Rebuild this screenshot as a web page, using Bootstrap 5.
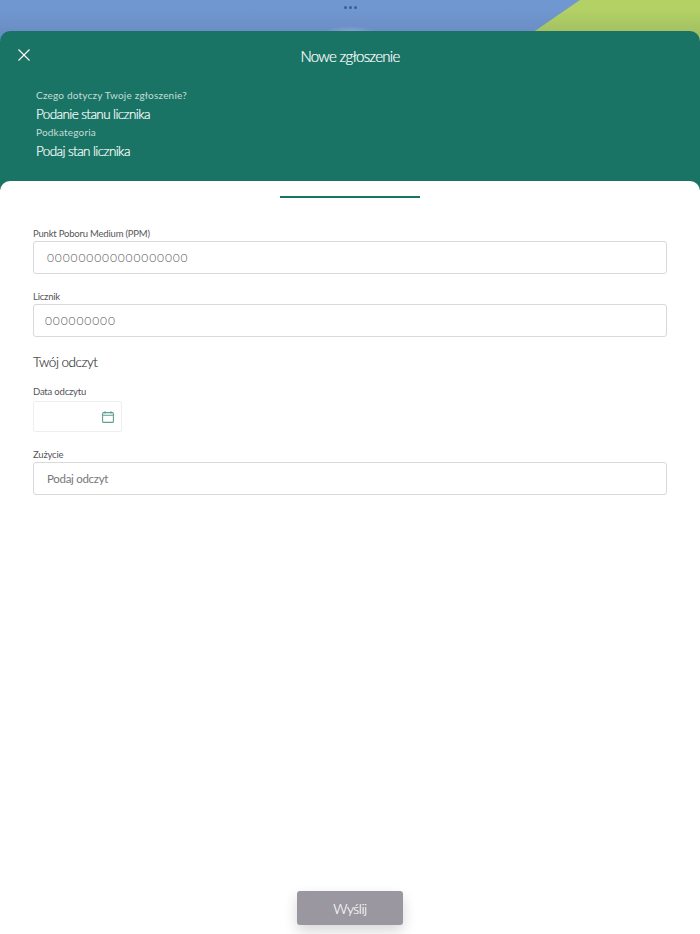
<!DOCTYPE html>
<html lang="pl">
<head>
    <meta charset="UTF-8">
    <meta name="viewport" content="width=device-width, initial-scale=1.0">
    <title>Nowe zgłoszenie</title>
    <link href="https://cdn.jsdelivr.net/npm/bootstrap@5.3.0/dist/css/bootstrap.min.css" rel="stylesheet">
    <style>
        html, body { height: 100%; }
        body { font-family: Lato, "Open Sans", sans-serif; background: #fff; color: #3d3d3f; overflow: hidden; }
        .app-screen { height: 934px; }
        .top-strip {
            height: 40px; margin-bottom: -9px; padding-top: 6px;
            background:
                radial-gradient(ellipse 24px 5px at 350px 31px, rgba(255,255,255,.18), rgba(255,255,255,0)),
                linear-gradient(to bottom, rgba(60,80,110,0) 10px, rgba(60,80,110,.14) 34px),
                linear-gradient(145.5deg, #7197d0 0, #7197d0 328px, #b3d164 329px, #b3d164 100%);
        }
        .strip-dots { gap: 2px; }
        .strip-dots span { width: 3px; height: 3px; border-radius: 50%; background: #3f5c9c; }
        .head-panel { background: #197465; color: #fff; border-radius: 10px 10px 0 0; height: 159px; margin-bottom: -9px; position: relative; padding: 0 36px; }
        .close-icon { position: absolute; left: 18px; top: 18px; width: 12px; height: 12px; display: block; }
        .panel-title { font-size: 15px; font-weight: 300; letter-spacing: -.7px; line-height: 20px; padding-top: 15px; margin-bottom: 22px; text-align: center; -webkit-text-stroke: .2px #fff; }
        .info-label { font-size: 10px; line-height: 15px; letter-spacing: .2px; color: #c6dcd7; }
        .info-value { font-size: 13.5px; font-weight: 300; letter-spacing: -.6px; line-height: 18px; margin: 2px 0; -webkit-text-stroke: .2px #fff; }
        .form-sheet { background: #fff; border-radius: 10px 10px 0 0; position: relative; flex: 1; padding: 15px 33px 9px; }
        .step-bar { width: 140px; height: 2px; background: #197465; margin: 0 auto 29px; }
        .field-label { font-size: 9.5px; letter-spacing: -.2px; line-height: 14px; margin: 0; color: #55555a; display: block; }
        .date-label { margin-bottom: 2px; }
        .field-input.form-control { height: 33px; font-size: 11.5px; letter-spacing: -.3px; padding: 0 13px; border: 1px solid #d9d9d9; border-radius: 3px; color: #77777b; background: #fff; box-shadow: none; }
        .field-input.form-control::placeholder { color: #77777b; opacity: 1; }
        .ppm-input.form-control { font-size: 12px; font-weight: 300; color: #55555a; letter-spacing: .9px; }
        .meter-input.form-control { font-size: 12px; font-weight: 300; color: #55555a; padding-left: 11px; letter-spacing: .9px; }
        .field-block { margin-bottom: 16px; }
        .section-title { font-size: 13.5px; font-weight: 300; letter-spacing: -.5px; line-height: 18px; margin: 0 0 14px; color: #2f2f31; -webkit-text-stroke: .15px #2f2f31; }
        .date-box { width: 89px; height: 31px; border: 1px solid #eeeeee; border-radius: 2px; padding-right: 7px; }
        .send-btn.btn { width: 106px; height: 34px; background: #9a97a0; border: 0; border-radius: 3px; color: #fff; font-size: 14px; font-weight: 300; letter-spacing: -.5px; padding: 0; box-shadow: 0 6px 14px rgba(0,0,0,.16); -webkit-text-stroke: .15px #fff; }
    </style>
</head>
<body>
<div class="app-screen d-flex flex-column">
    <div class="top-strip d-flex justify-content-center">
        <div class="strip-dots d-flex"><span></span><span></span><span></span></div>
    </div>

    <div class="head-panel">
        <svg class="close-icon" viewBox="0 0 12 12" fill="none" stroke="#fff" stroke-width="1.1"><path d="M.5.5l11 11M11.5.5l-11 11"/></svg>
        <div class="panel-title">Nowe zgłoszenie</div>
        <div class="info-label">Czego dotyczy Twoje zgłoszenie?</div>
        <div class="info-value">Podanie stanu licznika</div>
        <div class="info-label">Podkategoria</div>
        <div class="info-value">Podaj stan licznika</div>
    </div>

    <div class="form-sheet d-flex flex-column">
        <div class="step-bar"></div>
        <form class="d-flex flex-column flex-grow-1" onsubmit="return false">
            <div class="field-block">
                <label class="field-label" for="ppm">Punkt Poboru Medium (PPM)</label>
                <input id="ppm" type="text" class="form-control field-input ppm-input" value="000000000000000000">
            </div>
            <div class="field-block">
                <label class="field-label" for="meter">Licznik</label>
                <input id="meter" type="text" class="form-control field-input meter-input" value="000000000">
            </div>
            <h2 class="section-title">Twój odczyt</h2>
            <div class="field-block">
                <div class="field-label date-label">Data odczytu</div>
                <div class="date-box d-flex align-items-center justify-content-end">
                    <svg width="12" height="12" viewBox="0 0 12 12" fill="none" stroke="#5f9f92" stroke-width="1.1"><rect x=".6" y="1.6" width="10.8" height="9.8" rx="1"/><path d="M.6 4.2h10.8M3 .2v2.4M9 .2v2.4"/></svg>
                </div>
            </div>
            <div>
                <label class="field-label" for="usage">Zużycie</label>
                <input id="usage" type="text" class="form-control field-input" placeholder="Podaj odczyt">
            </div>
            <div class="mt-auto text-center">
                <button type="submit" class="btn send-btn">Wyślij</button>
            </div>
        </form>
    </div>
</div>
<script src="https://cdn.jsdelivr.net/npm/bootstrap@5.3.0/dist/js/bootstrap.bundle.min.js"></script>
</body>
</html>
